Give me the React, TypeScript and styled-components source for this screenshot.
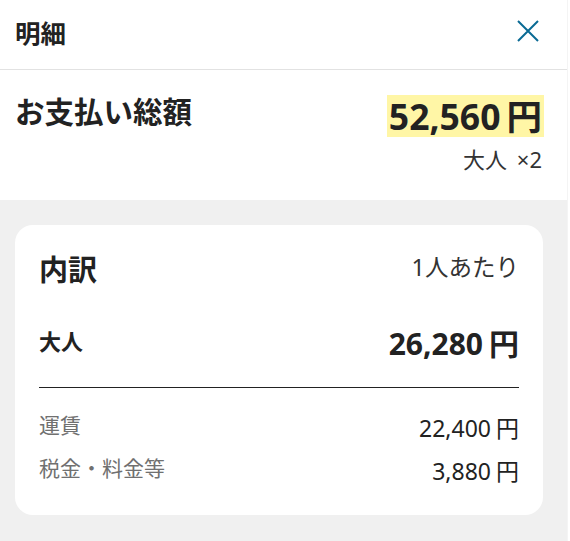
import React from 'react';
import styled, { createGlobalStyle } from 'styled-components';

const GlobalStyle = createGlobalStyle`
    html, body {
        margin: 0;
        padding: 0;
        background: #fff;
    }
    body {
        font-family: "Noto Sans", "Noto Sans CJK JP", sans-serif;
        color: #222;
    }
`;

const Panel = styled.div`
    width: 567px;
    height: 541px;
    background: #f0f0f0;
    border-right: 1px solid #f4f4f4;
    display: flex;
    flex-direction: column;
`;

const Header = styled.div`
    height: 69px;
    background: #fff;
    border-bottom: 1px solid #e2e2e2;
    display: flex;
    align-items: center;
    justify-content: space-between;
    padding: 0 26px 0 15px;
`;

const Title = styled.h1`
    margin: -6px 0 0;
    font-size: 25.5px;
    font-weight: 700;
    color: #222;
`;

const CloseButton = styled.button`
    border: none;
    background: none;
    padding: 0;
    margin-top: -7px;
    width: 26px;
    height: 26px;
    display: flex;
    align-items: center;
    justify-content: center;
    cursor: pointer;
`;

const TotalSection = styled.div`
    background: #fff;
    height: 130px;
    padding: 25px 25px 0 15px;
    box-sizing: border-box;
    display: flex;
    justify-content: space-between;
    align-items: flex-start;
`;

const TotalLabel = styled.div`
    font-size: 29.5px;
    font-weight: 700;
    line-height: 38px;
    margin-top: -2px;
`;

const TotalRight = styled.div`
    display: flex;
    flex-direction: column;
    align-items: flex-end;
`;

const Highlight = styled.div`
    background: #fff6a6;
    font-size: 35.5px;
    font-weight: 700;
    line-height: 42px;
    padding: 0 2px;
    margin-right: -2px;
`;

const Yen = styled.span<{ $gap?: number }>`
    margin-left: ${(p) => p.$gap ?? 6}px;
`;

const Passengers = styled.div`
    font-size: 22px;
    color: #333;
    line-height: 26px;
    margin-top: 9px;
    word-spacing: 4px;
`;

const Body = styled.div`
    padding: 25px 24px 0 15px;
`;

const Card = styled.div`
    background: #fff;
    border-radius: 18px;
    height: 290px;
    box-sizing: border-box;
    padding: 25px 24px 0 24px;
`;

const Row = styled.div<{ $height: number }>`
    display: flex;
    justify-content: space-between;
    align-items: center;
    height: ${(p) => p.$height}px;
`;

const CardTitle = styled.div`
    font-size: 29px;
    font-weight: 700;
`;

const PerPerson = styled.div`
    font-size: 23.5px;
    color: #333;
    margin-top: -4px;
`;

const AdultLabel = styled.div`
    font-size: 22px;
    font-weight: 700;
    margin-top: -4px;
`;

const AdultPrice = styled.div`
    font-size: 30px;
    font-weight: 700;
`;

const Divider = styled.hr`
    border: none;
    border-top: 1px solid #222;
    margin: 25px 0 0;
`;

const Items = styled.div`
    padding-top: 16px;
    display: flex;
    flex-direction: column;
    gap: 1px;
`;

const ItemLabel = styled.div`
    font-size: 21px;
    color: #707070;
    margin-top: -3px;
`;

const ItemPrice = styled.div`
    font-size: 23px;
    color: #222;
    margin-top: 3px;
`;

const items = [
    { label: '運賃', price: '22,400' },
    { label: '税金・料金等', price: '3,880' },
];

export default function App() {
    return (
        <>
            <GlobalStyle />
            <Panel>
                <Header>
                    <Title>明細</Title>
                    <CloseButton aria-label="閉じる">
                        <svg width="24" height="24" viewBox="0 0 24 24">
                            <path d="M2 2 L22 22 M22 2 L2 22" stroke="#0a6a94" strokeWidth="2" fill="none" />
                        </svg>
                    </CloseButton>
                </Header>
                <TotalSection>
                    <TotalLabel>お支払い総額</TotalLabel>
                    <TotalRight>
                        <Highlight>
                            52,560<Yen>円</Yen>
                        </Highlight>
                        <Passengers>大人 ×2</Passengers>
                    </TotalRight>
                </TotalSection>
                <Body>
                    <Card>
                        <Row $height={36}>
                            <CardTitle>内訳</CardTitle>
                            <PerPerson>1人あたり</PerPerson>
                        </Row>
                        <Row $height={40} style={{ marginTop: 36 }}>
                            <AdultLabel>大人</AdultLabel>
                            <AdultPrice>
                                26,280<Yen>円</Yen>
                            </AdultPrice>
                        </Row>
                        <Divider />
                        <Items>
                            {items.map((item) => (
                                <Row $height={42} key={item.label}>
                                    <ItemLabel>{item.label}</ItemLabel>
                                    <ItemPrice>
                                        {item.price}<Yen $gap={5}>円</Yen>
                                    </ItemPrice>
                                </Row>
                            ))}
                        </Items>
                    </Card>
                </Body>
            </Panel>
        </>
    );
}
